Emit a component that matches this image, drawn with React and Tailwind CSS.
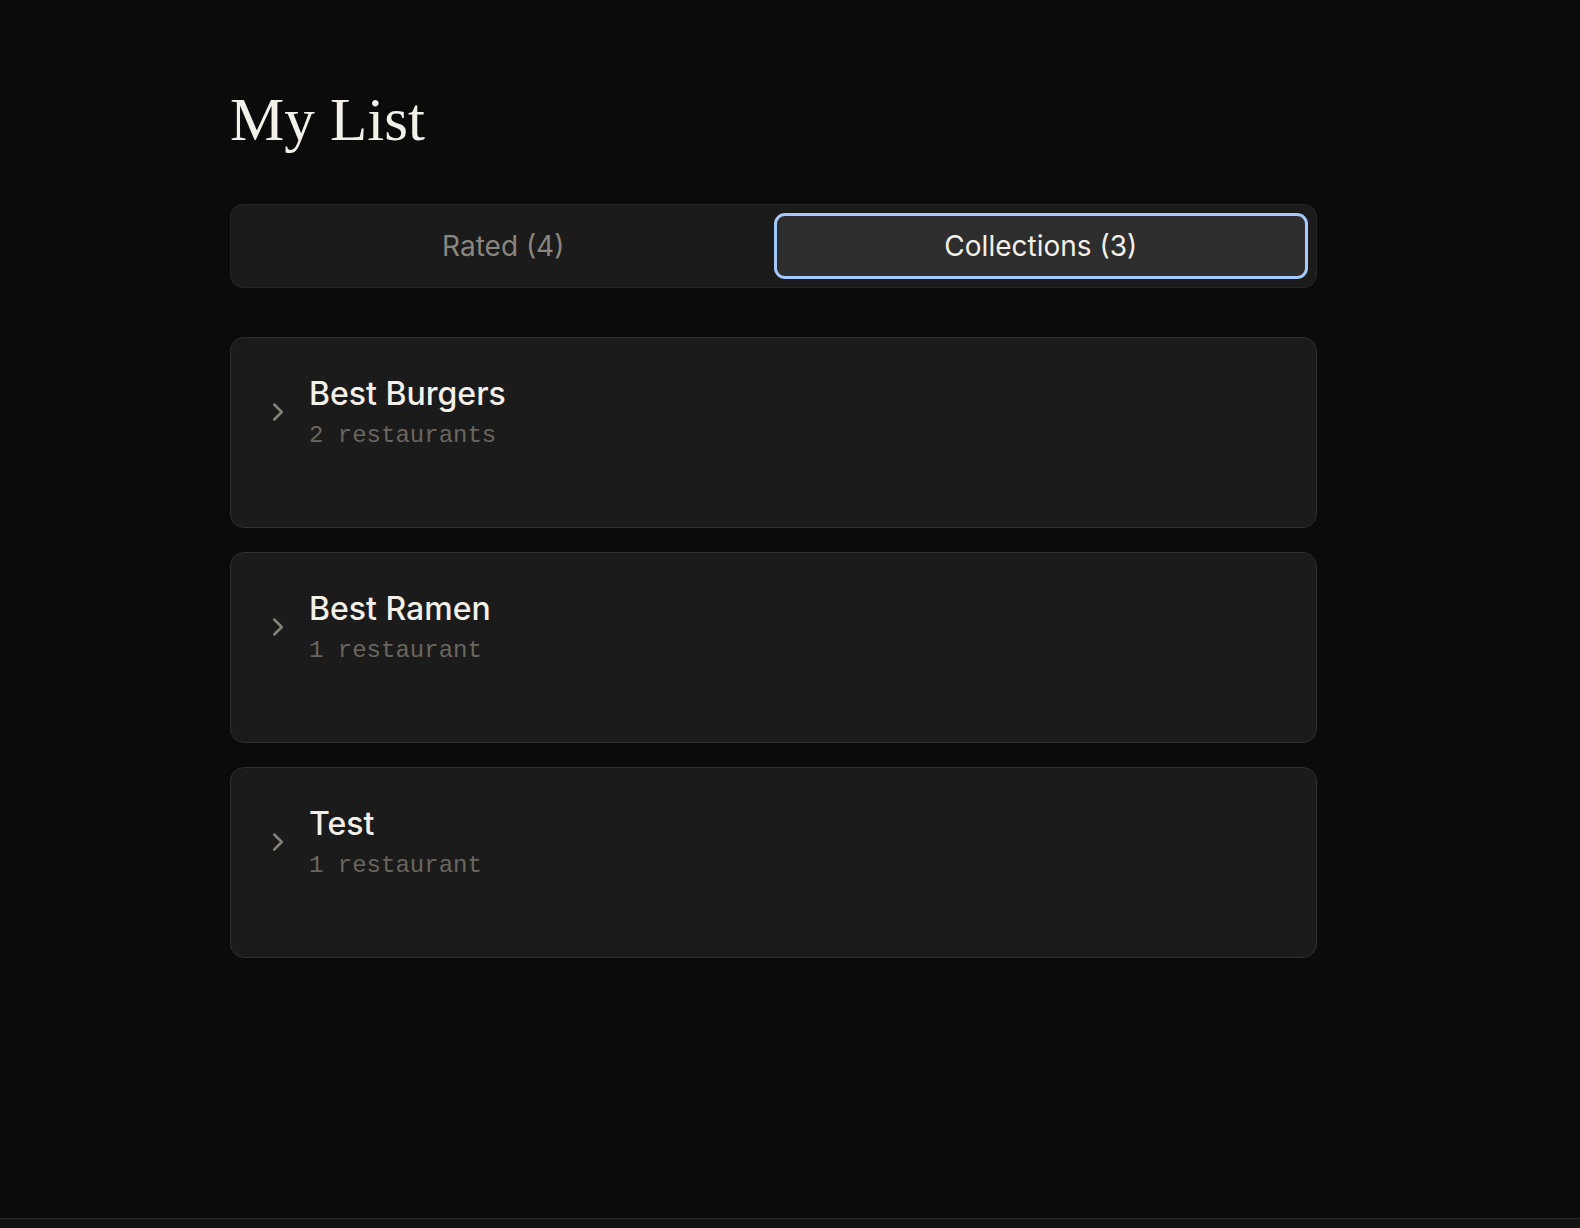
import React, { useState } from "react";
import { ChevronRight } from "lucide-react";

const collections = [
  { id: 1, name: "Best Burgers", count: 2 },
  { id: 2, name: "Best Ramen", count: 1 },
  { id: 3, name: "Test", count: 1 },
];

const CollectionCard = ({ collection }) => {
  return (
    <div className="h-[191px] rounded-[14px] border border-[#2e2e2e] bg-[#1b1b1b] px-8 pt-8">
      <div className="flex items-center gap-4">
        <ChevronRight size={30} strokeWidth={2} className="text-[#86817a]" />
        <div className="flex flex-col">
          <span className="text-[32px] font-medium leading-[48px] text-[#f3f0ea]">
            {collection.name}
          </span>
          <span className="font-['Liberation_Mono',monospace] text-[24px] leading-[36px] text-[#6a665f]">
            {collection.count} {collection.count === 1 ? "restaurant" : "restaurants"}
          </span>
        </div>
      </div>
    </div>
  );
};

const tabClass = (active) =>
  active
    ? "h-[66px] flex-1 rounded-[11px] border-[3px] border-[#a6c8fa] bg-[#2e2e2e] text-[28px] text-[#f3f0ea]"
    : "h-[66px] flex-1 rounded-[11px] text-[28px] text-[#8a857e]";

const App = () => {
  const [tab, setTab] = useState("collections");

  return (
    <div className="min-h-screen bg-[#0b0b0b] font-['Inter',sans-serif]">
      <main className="h-[1218px] pl-[230px] pt-[79px]">
        <div className="w-[1087px]">
          <h1 className="font-['Liberation_Serif',serif] text-[61px] leading-[82px] text-[#f3f0ea]">
            My List
          </h1>

          {/* Tabs */}
          <div className="mt-[43px] flex gap-1.5 rounded-[13px] border border-[#262626] bg-[#1b1b1b] p-2">
            <button onClick={() => setTab("rated")} className={tabClass(tab === "rated")}>
              Rated (4)
            </button>
            <button
              onClick={() => setTab("collections")}
              className={tabClass(tab === "collections")}
            >
              Collections (3)
            </button>
          </div>

          {/* Collection list */}
          <div className="mt-[49px] flex flex-col gap-6">
            {collections.map((c) => (
              <CollectionCard key={c.id} collection={c} />
            ))}
          </div>
        </div>
      </main>
      <footer className="h-[10px] border-t border-[#2a2a2a] bg-[#131313]" />
    </div>
  );
};

export default App;
